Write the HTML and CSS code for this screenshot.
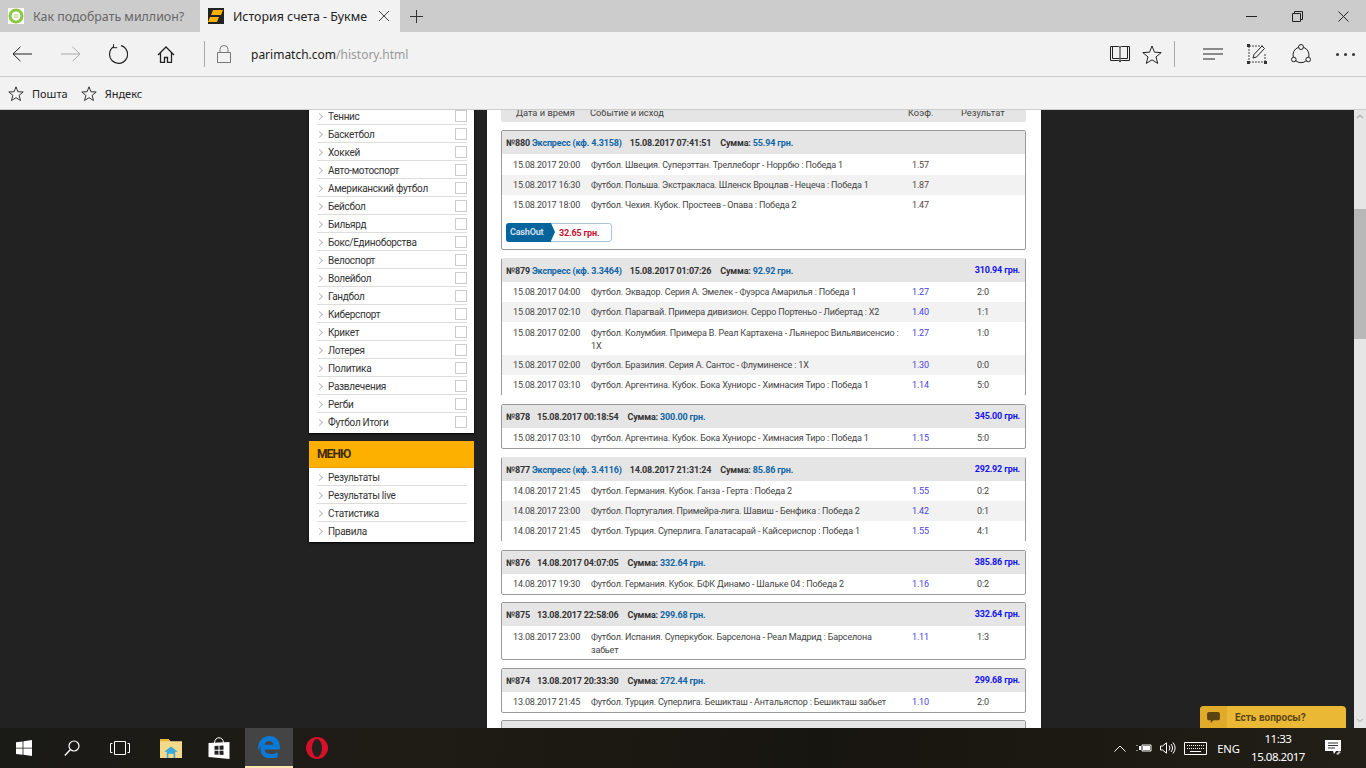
FILE: index.html
```html
<!DOCTYPE html>
<html lang="ru">
<head>
    <meta charset="UTF-8">
    <title>История счета - Букмекерская контора</title>
    <link rel="stylesheet" href="styles.css">
</head>
<body>
    <!-- tabs -->
    <div class="tabs">
        <div class="tab">
            <svg class="favicon" viewBox="0 0 16 16"><rect width="16" height="16" fill="#fff"/><circle cx="8" cy="8" r="6" fill="none" stroke="#8cc63f" stroke-width="3"/><circle cx="8" cy="8" r="2.5" fill="#d8e8b8"/></svg>
            <span class="tabName">Как подобрать миллион?</span>
        </div>
        <div class="tab tabActive">
            <svg class="favicon" viewBox="0 0 16 16"><rect width="16" height="16" fill="#222"/><path d="M5 2h10l-2 5H3zM2 9h9l-2 5H0z" fill="#fbb000"/></svg>
            <span class="tabName">История счета - Букме</span>
            <svg class="tabClose" viewBox="0 0 10 10"><path d="M0 0l10 10M10 0L0 10" stroke="#444" fill="none"/></svg>
        </div>
        <svg class="tabPlus" viewBox="0 0 13 13"><path d="M6.5 0v13M0 6.5h13" stroke="#333" fill="none"/></svg>
        <div class="winBtns">
            <div class="winBtn"><svg viewBox="0 0 11 11"><path d="M0 5.5h11" stroke="#222" fill="none"/></svg></div>
            <div class="winBtn"><svg viewBox="0 0 11 11"><path d="M.5 2.5h8v8h-8zM2.5 2.5v-2h8v8h-2" stroke="#222" fill="none"/></svg></div>
            <div class="winBtn"><svg viewBox="0 0 11 11"><path d="M.5.5l10 10M10.5.5l-10 10" stroke="#222" fill="none"/></svg></div>
        </div>
    </div>

    <!-- toolbar -->
    <div class="toolbar">
        <svg class="tool toolBack" viewBox="0 0 20 16"><path d="M20 8H1M8.500 .8L1 8l7.500 7.200" stroke="#222" fill="none"/></svg>
        <svg class="tool toolFwd" viewBox="0 0 20 16"><path d="M0 8h19M11.500 .8L19 8l-7.500 7.200" stroke="#aaa" fill="none"/></svg>
        <svg class="tool toolReload" viewBox="0 0 20 20"><path d="M6 2.600A9 9 0 1 0 13 1.700" stroke="#222" stroke-width="1.200" fill="none"/><path d="M5.500 .2v3.500h3.700" stroke="#222" fill="none"/></svg>
        <svg class="tool toolHome" viewBox="0 0 18 17"><path d="M1 9l8-8 8 8M3.500 7v9.500h4v-5h3v5h4V7" stroke="#222" stroke-width="1.300" fill="none"/></svg>
        <i class="toolSep"></i>
        <svg class="tool toolLock" viewBox="0 0 14 18"><path d="M.5 7.500h13v10H.5zM3 7.500V4.500a4 4 0 0 1 8 0v3" stroke="#777" fill="none"/></svg>
        <div class="url">parimatch.com<span class="urlPath">/history.html</span></div>
        <svg class="tool toolBook" viewBox="0 0 20 18"><path d="M.5 1.500h8c1 0 1.500 .5 1.500 1.500 0-1 .5-1.500 1.500-1.500h8v14h-8c-1 0-1.500 .5-1.500 1.500 0-1-.5-1.500-1.500-1.500h-8zM10 3v14M2.500 1.500v12h7M17.500 1.500v12h-7" stroke="#222" fill="none"/></svg>
        <svg class="tool toolStar" viewBox="0 0 20 19"><path d="M10 1l2.500 6.200 6.700 .4-5.200 4.300 1.700 6.500L10 14.800l-5.700 3.600L6 11.900 .8 7.600l6.700-.4z" stroke="#222" fill="none"/></svg>
        <i class="toolSep toolSepRight"></i>
        <svg class="tool toolHub" viewBox="0 0 20 12"><path d="M0 1h20M0 6h20M0 11h12" stroke="#222" fill="none"/></svg>
        <svg class="tool toolNote" viewBox="0 0 20 20"><path d="M2 2h14M2 18h16M2 2v16M18 10v8" stroke="#444" stroke-dasharray="2 1" fill="none"/><rect x="0" y="0" width="3" height="3" fill="#333"/><rect x="0" y="17" width="3" height="3" fill="#333"/><rect x="17" y="17" width="3" height="3" fill="#333"/><path d="M6 14l1-3.500 8-8.500 2.500 2.500-8 8.500z" stroke="#222" fill="none"/></svg>
        <svg class="tool toolShare" viewBox="0 0 20 20"><path d="M7 3.500A8 8 0 0 0 2.300 13M4.500 16.500a8 8 0 0 0 11 0M17.700 13A8 8 0 0 0 13 3.500" stroke="#222" fill="none"/><circle cx="10" cy="3" r="2.500" fill="none" stroke="#222"/><circle cx="2.800" cy="15.500" r="2.300" fill="none" stroke="#222"/><circle cx="17.200" cy="15.500" r="2.300" fill="none" stroke="#222"/></svg>
        <div class="toolMore"><i></i><i></i><i></i></div>
    </div>

    <!-- favorites -->
    <div class="favBar">
        <svg class="favStar" viewBox="0 0 16 15"><path d="M8 .8l1.900 4.900 5.300 .3-4.100 3.400 1.400 5.100L8 11.700l-4.500 2.800 1.400-5.100L.8 6l5.300-.3z" stroke="#333" fill="none"/></svg>
        <span class="favName">Пошта</span>
        <svg class="favStar" viewBox="0 0 16 15"><path d="M8 .8l1.900 4.900 5.300 .3-4.100 3.400 1.400 5.100L8 11.700l-4.500 2.800 1.400-5.100L.8 6l5.300-.3z" stroke="#333" fill="none"/></svg>
        <span class="favName">Яндекс</span>
    </div>

    <!-- page -->
    <div class="page">
        <div class="site">
            <div class="sideCol">
                <ul class="sideList sports">
                    <li>Теннис<i class="chk"></i></li>
                    <li>Баскетбол<i class="chk"></i></li>
                    <li>Хоккей<i class="chk"></i></li>
                    <li>Авто-мотоспорт<i class="chk"></i></li>
                    <li>Американский футбол<i class="chk"></i></li>
                    <li>Бейсбол<i class="chk"></i></li>
                    <li>Бильярд<i class="chk"></i></li>
                    <li>Бокс/Единоборства<i class="chk"></i></li>
                    <li>Велоспорт<i class="chk"></i></li>
                    <li>Волейбол<i class="chk"></i></li>
                    <li>Гандбол<i class="chk"></i></li>
                    <li>Киберспорт<i class="chk"></i></li>
                    <li>Крикет<i class="chk"></i></li>
                    <li>Лотерея<i class="chk"></i></li>
                    <li>Политика<i class="chk"></i></li>
                    <li>Развлечения<i class="chk"></i></li>
                    <li>Регби<i class="chk"></i></li>
                    <li>Футбол Итоги<i class="chk"></i></li>
                </ul>
                <h3 class="menuHead">МЕНЮ</h3>
                <ul class="sideList">
                    <li>Результаты</li>
                    <li>Результаты live</li>
                    <li>Статистика</li>
                    <li>Правила</li>
                </ul>
            </div>

            <div class="history">
                <div class="colHead">
                    <span>Дата и время</span>
                    <span>Событие и исход</span>
                    <span>Коэф.</span>
                    <span>Результат</span>
                </div>

                <section class="ticket">
                    <div class="tHead"><b>№880</b><b class="blue exp">Экспресс (кф. 4.3158)</b><b class="when">15.08.2017 07:41:51</b><b class="sum">Сумма: <span class="blue">55.94 грн.</span></b></div>
                    <div class="row rowLong"><span>15.08.2017 20:00</span><span>Футбол. Швеция. Суперэттан. Треллеборг - Норрбю : Победа 1</span><span class="kf kfOpen">1.57</span><span></span></div>
                    <div class="row"><span>15.08.2017 16:30</span><span>Футбол. Польша. Экстракласа. Шленск Вроцлав - Нецеча : Победа 1</span><span class="kf kfOpen">1.87</span><span></span></div>
                    <div class="row"><span>15.08.2017 18:00</span><span>Футбол. Чехия. Кубок. Простеев - Опава : Победа 2</span><span class="kf kfOpen">1.47</span><span></span></div>
                    <div class="cashRow"><div class="cash"><b class="cashBtn">CashOut</b><b class="cashSum">32.65 грн.</b></div></div>
                </section>

                <section class="ticket noLine">
                    <div class="tHead"><b>№879</b><b class="blue exp">Экспресс (кф. 3.3464)</b><b class="when">15.08.2017 01:07:26</b><b class="sum">Сумма: <span class="blue">92.92 грн.</span></b><b class="win">310.94 грн.</b></div>
                    <div class="row"><span>15.08.2017 04:00</span><span>Футбол. Эквадор. Серия А. Эмелек - Фуэрса Амарилья : Победа 1</span><span class="kf">1.27</span><span>2:0</span></div>
                    <div class="row"><span>15.08.2017 02:10</span><span>Футбол. Парагвай. Примера дивизион. Серро Портеньо - Либертад : Х2</span><span class="kf">1.40</span><span>1:1</span></div>
                    <div class="row rowTall"><span>15.08.2017 02:00</span><span>Футбол. Колумбия. Примера В. Реал Картахена - Льянерос Вильявисенсио : 1Х</span><span class="kf">1.27</span><span>1:0</span></div>
                    <div class="row"><span>15.08.2017 02:00</span><span>Футбол. Бразилия. Серия А. Сантос - Флуминенсе : 1Х</span><span class="kf">1.30</span><span>0:0</span></div>
                    <div class="row"><span>15.08.2017 03:10</span><span>Футбол. Аргентина. Кубок. Бока Хуниорс - Химнасия Тиро : Победа 1</span><span class="kf">1.14</span><span>5:0</span></div>
                </section>

                <section class="ticket">
                    <div class="tHead"><b>№878</b><b class="when">15.08.2017 00:18:54</b><b class="sum">Сумма: <span class="blue">300.00 грн.</span></b><b class="win">345.00 грн.</b></div>
                    <div class="row"><span>15.08.2017 03:10</span><span>Футбол. Аргентина. Кубок. Бока Хуниорс - Химнасия Тиро : Победа 1</span><span class="kf">1.15</span><span>5:0</span></div>
                </section>

                <section class="ticket noLine">
                    <div class="tHead"><b>№877</b><b class="blue exp">Экспресс (кф. 3.4116)</b><b class="when">14.08.2017 21:31:24</b><b class="sum">Сумма: <span class="blue">85.86 грн.</span></b><b class="win">292.92 грн.</b></div>
                    <div class="row"><span>14.08.2017 21:45</span><span>Футбол. Германия. Кубок. Ганза - Герта : Победа 2</span><span class="kf">1.55</span><span>0:2</span></div>
                    <div class="row"><span>14.08.2017 23:00</span><span>Футбол. Португалия. Примейра-лига. Шавиш - Бенфика : Победа 2</span><span class="kf">1.42</span><span>0:1</span></div>
                    <div class="row"><span>14.08.2017 21:45</span><span>Футбол. Турция. Суперлига. Галатасарай - Кайсериспор : Победа 1</span><span class="kf">1.55</span><span>4:1</span></div>
                </section>

                <section class="ticket tight">
                    <div class="tHead"><b>№876</b><b class="when">14.08.2017 04:07:05</b><b class="sum">Сумма: <span class="blue">332.64 грн.</span></b><b class="win">385.86 грн.</b></div>
                    <div class="row"><span>14.08.2017 19:30</span><span>Футбол. Германия. Кубок. БФК Динамо - Шальке 04 : Победа 2</span><span class="kf">1.16</span><span>0:2</span></div>
                </section>

                <section class="ticket">
                    <div class="tHead"><b>№875</b><b class="when">13.08.2017 22:58:06</b><b class="sum">Сумма: <span class="blue">299.68 грн.</span></b><b class="win">332.64 грн.</b></div>
                    <div class="row rowTall"><span>13.08.2017 23:00</span><span>Футбол. Испания. Суперкубок. Барселона - Реал Мадрид : Барселона забьет</span><span class="kf">1.11</span><span>1:3</span></div>
                </section>

                <section class="ticket tight">
                    <div class="tHead"><b>№874</b><b class="when">13.08.2017 20:33:30</b><b class="sum">Сумма: <span class="blue">272.44 грн.</span></b><b class="win">299.68 грн.</b></div>
                    <div class="row"><span>13.08.2017 21:45</span><span>Футбол. Турция. Суперлига. Бешикташ - Антальяспор : Бешикташ забьет</span><span class="kf">1.10</span><span>2:0</span></div>
                </section>

                <section class="ticket"><div class="tHead"></div></section>
            </div>
        </div>

        <div class="scroll">
            <svg class="scrollUp" viewBox="0 0 10 6"><path d="M1 5l4-3.500L9 5" stroke="#aaa" stroke-width="1.500" fill="none"/></svg>
            <div class="thumb"></div>
            <svg class="scrollDown" viewBox="0 0 10 6"><path d="M1 1l4 3.500L9 1" stroke="#aaa" stroke-width="1.200" fill="none"/></svg>
        </div>

        <div class="chat">
            <div class="chatIcon"><svg viewBox="0 0 14 12"><path d="M2 0h10c1 0 2 1 2 2v5c0 1-1 2-2 2H7l-3 3V9H2C1 9 0 8 0 7V2C0 1 1 0 2 0z" fill="#5a4510"/></svg></div>
            <b class="chatText">Есть вопросы?</b>
        </div>
    </div>

    <!-- taskbar -->
    <div class="taskbar">
        <div class="taskBtn"><svg viewBox="0 0 16 16"><path d="M0 2.300l6.600-.9v6.300H0zM7.400 1.300L16 0v7.700H7.400zM0 8.500h6.600v6.300L0 13.900zM7.400 8.500H16V16l-8.600-1.200z" fill="#fff"/></svg></div>
        <div class="taskBtn"><svg viewBox="0 0 16 16"><circle cx="10" cy="6" r="5" fill="none" stroke="#fff" stroke-width="1.200"/><path d="M6.500 9.500L.8 15.500" stroke="#fff" stroke-width="1.400"/></svg></div>
        <div class="taskBtn"><svg class="taskView" viewBox="0 0 20 14"><path d="M4.500 .5h11v13h-11zM2.500 2.500H.5v9h2M17.500 2.500h2v9h-2" stroke="#fff" fill="none"/></svg></div>
        <div class="taskBtn taskFiles"><svg class="bigIcon" viewBox="0 0 21 19"><path d="M0 1h8l2 2h11v16H0z" fill="#f5d98a"/><path d="M0 1h8l1 2H0z" fill="#e8b93c"/><path d="M4 13l6.500-5 6.500 5h-2.500v6h-8v-6z" fill="#39a9dc"/><path d="M8 15h5v4H8z" fill="#f5d98a"/></svg></div>
        <div class="taskBtn"><svg class="bigIcon" viewBox="0 0 21 22"><path d="M0 6l21-1v17L0 20z" fill="#fff"/><path d="M6 6c0-7 9-7 9 0" fill="none" stroke="#fff"/><path d="M6 9l4-.2v4H6zM11 8.800l4-.2v4.200h-4zM6 13.800h4v4l-4-.2zM11 13.800h4V18l-4-.2z" fill="#222"/></svg></div>
        <div class="taskBtn taskActive"><svg class="bigIcon" viewBox="0 0 20 20"><path d="M.3 9C1.200 3.500 5.500 0 10.500 0 16 0 20 4 20 10.500v1.700H6c.3 4.500 7 5.500 12 2.500v4.500c-6 2.800-15 1.500-15.800-6 -.2-2 .8-4.300 2-5.300C2.800 8.900 1.500 10.800 .3 13.500zM6 8h8c0-4.500-7.300-4.500-8 0z" fill="#0a7ad6"/></svg></div>
        <div class="taskBtn"><svg class="bigIcon" viewBox="0 0 22 22"><ellipse cx="11" cy="11" rx="11" ry="11" fill="#d3112b"/><ellipse cx="11" cy="11" rx="5" ry="9" fill="#26201c"/></svg></div>

        <div class="tray">
            <svg class="trayCaret" viewBox="0 0 12 7"><path d="M.5 6.500L6 1l5.500 5.500" stroke="#fff" fill="none"/></svg>
            <svg class="trayPower" viewBox="0 0 16 10"><path d="M6 2h9v6H6z" stroke="#fff" fill="none"/><path d="M7 3h7v4H7zM0 5h4M3 3h2v4H3z" fill="#fff"/><path d="M1 2v1M1 7v1" stroke="#fff"/></svg>
            <svg class="traySound" viewBox="0 0 16 12"><path d="M.5 4h2L6.500 .8v10.400L2.500 8h-2z" stroke="#fff" fill="none"/><path d="M9 3.500a4 4 0 0 1 0 5M11 2a6.500 6.500 0 0 1 0 8M13 .5a9 9 0 0 1 0 11" stroke="#fff" fill="none"/></svg>
            <svg class="trayKeys" viewBox="0 0 23 13"><path d="M.5 .5h22v12H.5z" stroke="#fff" fill="none"/><path d="M3 3.500h17M3 6.500h17" stroke="#fff" stroke-dasharray="1 1"/><path d="M6 9.500h11" stroke="#fff"/></svg>
            <span class="lang">ENG</span>
            <div class="clock"><span>11:33</span><span>15.08.2017</span></div>
            <svg class="trayNote" viewBox="0 0 17 16"><path d="M0 0h16v11h-5l-2 3-1-3H0z" fill="#fff"/><path d="M3 3h10M3 5.500h10M3 8h7" stroke="#333"/><path d="M11 14l3-3 2 1-3 3z" fill="#bbb"/></svg>
        </div>
    </div>
</body>
</html>
```

FILE: styles.css
```css
*{
    box-sizing: border-box;
}
html,
body{
    margin: 0;
    height: 100%;
    overflow: hidden;
}
body{
    display: flex;
    flex-direction: column;
    width: 1366px;
    height: 768px;
    font-family: "Noto Sans", "Liberation Sans", sans-serif;
    background: #222;
}
ul{
    margin: 0;
    padding: 0;
    list-style: none;
}
svg{
    display: block;
    flex: none;
}

/* tabs */
.tabs{
    display: flex;
    align-items: center;
    height: 32px;
    flex: none;
    background: #ccc;
}
.tab{
    display: flex;
    align-items: center;
    width: 200px;
    height: 32px;
    padding-left: 8px;
    font-size: 12.4px;
    color: #666;
}
.tabActive{
    background: #f2f2f2;
    color: #222;
}
.favicon{
    width: 16px;
    height: 16px;
    margin-right: 9px;
}
.tabName{
    white-space: nowrap;
}
.tabClose{
    width: 10px;
    height: 10px;
    margin-left: 12px;
}
.tabPlus{
    width: 13px;
    height: 13px;
    margin-left: 10px;
}
.winBtns{
    display: flex;
    margin-left: auto;
}
.winBtn{
    display: flex;
    align-items: center;
    justify-content: center;
    width: 46px;
    height: 32px;
}
.winBtn svg{
    width: 11px;
    height: 11px;
}

/* toolbar */
.toolbar{
    display: flex;
    align-items: center;
    height: 45px;
    flex: none;
    background: #f2f2f2;
    border-bottom: 1px solid #ccc;
}
.toolBack{
    width: 20px;
    height: 16px;
    margin-left: 12px;
}
.toolFwd{
    width: 20px;
    height: 16px;
    margin-left: 29px;
}
.toolReload{
    width: 20px;
    height: 20px;
    margin-left: 27px;
}
.toolHome{
    width: 18px;
    height: 17px;
    margin-left: 29px;
}
.toolSep{
    width: 1px;
    height: 26px;
    margin-left: 29px;
    background: #aaa;
}
.toolLock{
    width: 14px;
    height: 18px;
    margin-left: 12px;
}
.url{
    width: 600px;
    margin-left: 20px;
    font-size: 12px;
    color: #222;
}
.urlPath{
    color: #999;
}
.toolBook{
    width: 20px;
    height: 18px;
    margin-left: 259px;
}
.toolStar{
    width: 20px;
    height: 19px;
    margin-left: 12px;
}
.toolSepRight{
    margin-left: 12px;
}
.toolHub{
    width: 20px;
    height: 12px;
    margin-left: 28px;
}
.toolNote{
    width: 20px;
    height: 20px;
    margin-left: 24px;
}
.toolShare{
    width: 20px;
    height: 20px;
    margin-left: 24px;
}
.toolMore{
    display: flex;
    gap: 5px;
    margin-left: 25px;
}
.toolMore i{
    width: 3px;
    height: 3px;
    background: #333;
    border-radius: 50%;
}

/* favorites */
.favBar{
    display: flex;
    align-items: center;
    height: 33px;
    flex: none;
    padding-left: 8px;
    background: #f2f2f2;
    border-bottom: 1px solid #ccc;
    font-size: 11px;
    color: #222;
}
.favStar{
    width: 16px;
    height: 15px;
}
.favName{
    margin: 0 13px 0 8px;
}

/* page */
.page{
    position: relative;
    display: flex;
    flex: 1;
    min-height: 0;
    overflow: hidden;
    background: #222;
}
.site{
    display: flex;
    align-items: flex-start;
    flex: 1;
    padding-left: 309px;
    font-family: Roboto, "Liberation Sans", sans-serif;
}
.sideCol{
    width: 165px;
    margin-top: -3px;
    color: #333;
    font-size: 10px;
    letter-spacing: -.3px;
}
.sideList{
    padding: 0 7px 2px 8px;
    background: #fff;
    box-shadow: 0 1px 2px #000;
}
.sideList li{
    position: relative;
    display: flex;
    align-items: center;
    justify-content: space-between;
    height: 18px;
    padding: 2px 0 0 11px;
    border-bottom: 1px solid #ddd;
}
.sideList li:last-child{
    border-bottom-color: transparent;
}
.sideList li::before{
    content: "";
    position: absolute;
    left: 0;
    top: 7px;
    width: 4px;
    height: 4px;
    border-top: 1px solid #bbb;
    border-right: 1px solid #bbb;
    transform: rotate(45deg);
}
.chk{
    width: 12px;
    height: 12px;
    margin-top: -2px;
    background: #fff;
    border: 1px solid #ccc;
}
.menuHead{
    margin: 8px 0 0;
    height: 27px;
    padding-left: 8px;
    background: #fdb000;
    color: #3a2a05;
    font-size: 12px;
    line-height: 27px;
    letter-spacing: -.9px;
}

/* history */
.history{
    width: 554px;
    min-height: 640px;
    margin: -3px 0 0 13px;
    padding: 0 15px 0 14px;
    background: #fff;
    color: #444;
    font-size: 9px;
    letter-spacing: -.17px;
}
.colHead{
    display: grid;
    grid-template-columns: 74px 318px 53px 1fr;
    align-items: center;
    height: 15px;
    margin-bottom: 8px;
    padding: 0 0 4px 15px;
    background: #e5e5e5;
    border-radius: 0 0 2px 2px;
    font-size: 9.3px;
    letter-spacing: 0;
}
.ticket{
    margin-bottom: 8px;
    border: 1px solid #999;
    border-radius: 2px;
    background: #fff;
}
.tight{
    margin-bottom: 7px;
}
.noLine{
    border-top-color: #e5e5e5;
    border-bottom-color: transparent;
}
.tHead{
    display: flex;
    align-items: center;
    height: 23px;
    padding: 1px 5px 0 4px;
    background: #e5e5e5;
    color: #333;
}
.blue{
    color: #0f65a5;
}
.exp{
    margin-left: 2px;
}
.when{
    margin-left: 7px;
}
.exp + .when{
    margin-left: 8px;
}
.sum{
    margin-left: 9px;
}
.win{
    margin: -3px 0 0 auto;
    color: #1414f0;
}
.row{
    display: grid;
    grid-template-columns: 78px 321px 65px 1fr;
    align-items: center;
    height: 20px;
    padding-left: 11px;
}
.row:nth-child(odd){
    background: #f2f2f2;
}
.row span:nth-child(2){
    padding-right: 13px;
}
.rowLong{
    height: 21px;
}
.rowTall{
    align-items: start;
    height: 33px;
    padding-top: 5px;
    line-height: 13px;
}
.kf{
    color: #4a3fe0;
}
.kfOpen{
    color: #544;
}
.cashRow{
    padding: 8px 0 7px 4px;
    height: 34px;
}
.cash{
    display: flex;
    align-items: center;
    width: 106px;
    height: 19px;
    border: 1px solid #a8c4dc;
    border-radius: 3px;
    background: #fff;
}
.cashBtn{
    position: relative;
    display: block;
    width: 45px;
    height: 19px;
    margin: -1px 0 -1px -1px;
    padding-left: 4px;
    background: #06649c;
    border-radius: 3px 0 0 3px;
    color: #ccdfee;
    line-height: 19px;
}
.cashBtn::after{
    content: "";
    position: absolute;
    right: -4px;
    top: 0;
    border-left: 4px solid #06649c;
    border-top: 9.500px solid transparent;
    border-bottom: 9.500px solid transparent;
}
.cashSum{
    margin-left: 8px;
    color: #c8102e;
}

/* scrollbar */
.scroll{
    display: flex;
    flex-direction: column;
    align-items: center;
    width: 12px;
    flex: none;
    background: #e6e6e6;
}
.scrollUp{
    width: 8px;
    height: 5px;
    margin-top: 4px;
}
.thumb{
    width: 12px;
    height: 130px;
    margin-top: 90px;
    background: #b8b8b8;
}
.scrollDown{
    width: 8px;
    height: 5px;
    margin-top: auto;
    margin-bottom: 5px;
}

/* chat button stays over the page */
.chat{
    position: absolute;
    right: 20px;
    bottom: 0;
    display: flex;
    align-items: center;
    width: 146px;
    height: 22px;
    background: #ebb835;
    border-radius: 4px 4px 0 0;
    font-family: Roboto, "Liberation Sans", sans-serif;
    font-size: 10px;
    color: #5a4510;
}
.chatIcon{
    display: flex;
    align-items: center;
    justify-content: center;
    width: 27px;
    height: 22px;
    background: #e0aa2a;
    border-radius: 4px 0 0 0;
}
.chatIcon svg{
    width: 13px;
    height: 11px;
}
.chatText{
    margin-left: 8px;
}

/* taskbar */
.taskbar{
    display: flex;
    align-items: center;
    height: 40px;
    flex: none;
    background: linear-gradient(100deg, #1a1a16, #1f1c16 30%, #17150f 60%, #221e18);
    color: #fff;
}
.taskBtn{
    display: flex;
    align-items: center;
    justify-content: center;
    width: 48px;
    height: 40px;
}
.taskBtn svg{
    width: 16px;
    height: 16px;
}
.taskBtn .taskView{
    width: 20px;
    height: 14px;
}
.taskBtn .bigIcon{
    width: 22px;
    height: 22px;
}
.taskFiles{
    margin-left: 3px;
}
.taskActive{
    margin-left: 2px;
    background: #444;
    border-bottom: 2px solid #fde4b0;
}
.tray{
    display: flex;
    align-items: center;
    margin-left: auto;
    font-size: 12px;
}
.trayCaret{
    width: 12px;
    height: 7px;
}
.trayPower{
    width: 16px;
    height: 10px;
    margin-left: 10px;
}
.traySound{
    width: 16px;
    height: 12px;
    margin-left: 8px;
}
.trayKeys{
    width: 23px;
    height: 13px;
    margin-left: 8px;
}
.lang{
    margin-left: 10px;
    font-size: 11.2px;
}
.clock{
    display: flex;
    flex-direction: column;
    align-items: center;
    width: 76px;
    font-size: 11.5px;
    letter-spacing: -.5px;
    line-height: 18px;
}
.trayNote{
    width: 17px;
    height: 16px;
    margin: 0 24px 0 9px;
}
```
